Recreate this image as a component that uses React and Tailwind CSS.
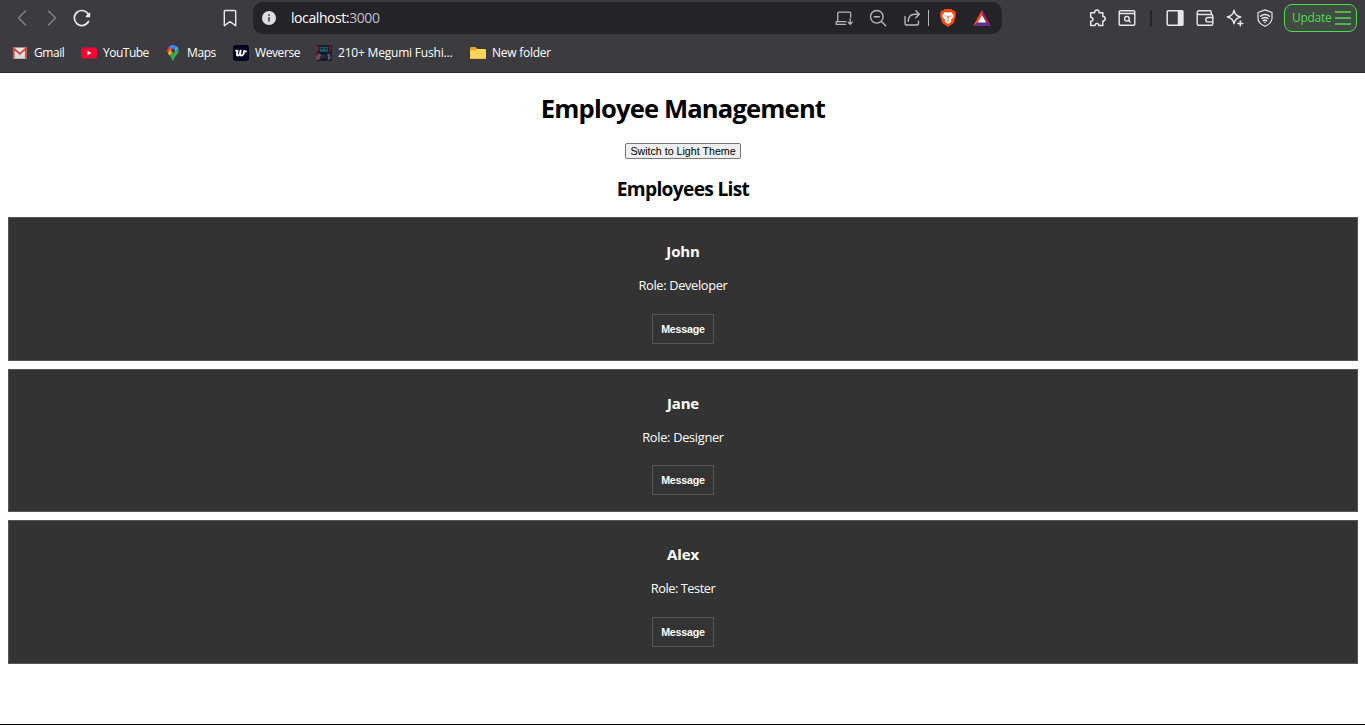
import React from 'react';

const stroke = { fill: 'none', stroke: 'currentColor', strokeLinecap: 'round', strokeLinejoin: 'round' };

function Icon({ children, size = 18, className = '', width = 1.4 }) {
  return (
    <svg width={size} height={size} viewBox={`0 0 ${size} ${size}`} className={`block shrink-0 ${className}`} {...stroke} strokeWidth={width}>
      {children}
    </svg>
  );
}

function GmailIcon() {
  return (
    <svg width="16" height="16" viewBox="0 0 16 16" className="block">
      <path d="M1 2.500h13.500v11H1z" fill="#e9e9e9" />
      <path d="M1 13.500 7.800 7l6.700 6.500z" fill="#dadada" />
      <path d="M1.700 13.500V3.500l6.100 5.300 6-5.300v10" fill="none" stroke="#db4437" strokeWidth="1.800" />
    </svg>
  );
}

function YouTubeIcon() {
  return (
    <svg width="16" height="16" viewBox="0 0 16 16" className="block">
      <rect x="0" y="2.500" width="16" height="11" rx="2.800" fill="#ff0033" />
      <path d="M6.500 5.800v4.400l4-2.200z" fill="#fff" />
    </svg>
  );
}

function MapsIcon() {
  return (
    <svg width="16" height="16" viewBox="0 0 16 16" className="block">
      <path d="M8 0a5.600 5.600 0 0 0-4.300 2L8 5.600 12 1.600A5.600 5.600 0 0 0 8 0z" fill="#4285f4" />
      <path d="M3.700 2A5.600 5.600 0 0 0 2.900 8L8 5.600z" fill="#ea4335" />
      <path d="M2.900 8c.4 1 1 1.800 1.700 2.600L10 5 6 4z" fill="#fbbc04" />
      <path d="M13.300 3.800c1 3.200-.6 5-2.200 6.900C9.600 12.600 9 14 8.600 15.500c-.2.600-1 .6-1.200 0-.5-1.800-1.300-3.200-2.800-4.900z" fill="#34a853" />
      <path d="M12 1.600c.6.600 1 1.300 1.300 2.200L10 7 8.500 4.500z" fill="#5a9bf8" />
      <circle cx="8" cy="5.500" r="2" fill="#3c3b40" />
    </svg>
  );
}

function WeverseIcon() {
  return (
    <svg width="16" height="16" viewBox="0 0 16 16" className="block">
      <rect width="16" height="16" rx="3" fill="#04041f" />
      <path d="M2.300 5.600h2.200L3.900 9c-.2 1 .3 1.500 1 1.500 1.400 0 2.200-1.600 2.700-4.900L7.200 9c-.1 1 .4 1.500 1.200 1.500 1.800 0 2.600-2 2.800-4.500.7.800 1.500.7 2.400-.1" fill="none" stroke="#fff" strokeWidth="1.900" strokeLinejoin="round" />
    </svg>
  );
}

function PixelArtIcon() {
  return (
    <svg width="16" height="16" viewBox="0 0 16 16" className="block">
      <path d="M0 0h16v16H0z" fill="#241c2b" />
      <path d="M0 1h3v5H1v3H0zM13 1h2v6h-1z" fill="#5c2936" />
      <path d="M4 2h8v5H4z" fill="#155666" />
      <path d="M5 3h2v1H5zM9 3h2v1H9z" fill="#071e2a" />
      <path d="M3 7h10v2H3z" fill="#151421" />
      <path d="m0 11 3-3 2 2-3 5H0zM11 9h3l1 5h-2z" fill="#8c3b48" />
      <path d="m3 9 2 1-2 5H2zM12 9h1v6h-1z" fill="#34658c" />
      <path d="M5 10h5v3H5z" fill="#332838" />
      <path d="M6 13h4v3H6z" fill="#111524" />
    </svg>
  );
}

function FolderIcon() {
  return (
    <svg width="16" height="16" viewBox="0 0 16 16" className="block">
      <path d="M0 3.500C0 2.700.5 2 1.300 2h4.200L7.300 4H15v3H0z" fill="#e8a824" />
      <path d="M0 5.500h5.600L7.300 4h7.200c.9 0 1.500.6 1.500 1.400v7c0 .9-.6 1.600-1.500 1.600h-13C.6 14 0 13.300 0 12.400z" fill="#ffd65b" />
      <path d="M.3 13.200c.3.500.7.800 1.200.8h13c.5 0 .9-.3 1.200-.8z" fill="#e9b93b" />
    </svg>
  );
}

function BraveIcon() {
  return (
    <svg width="16" height="18" viewBox="0 0 16 18" className="block">
      <path d="M4.700 0h6.600l1.600 1.700 1.700-.2L16 4l-.5 1.600.4 1.200-2.200 7.200L8 18l-5.700-4L.1 6.800l.4-1.200L0 4l1.400-2.500 1.700.2z" fill="#fb4b12" />
      <path d="m4.900 3.100 3.100.5 3.100-.5 2.700 3.100-.6 2.400-2.300 2.100.5 1.700L8 15l-3.400-2.600.5-1.700-2.300-2.100-.6-2.400z" fill="#fff" />
      <path d="m4.200 6.300 2.400.6-.7 1zM11.800 6.300l-2.400.6.700 1zM7.400 7h1.200v3L8 10.500 7.400 10zM6.200 12l1.800-.7 1.800.7-1.800.6z" fill="#fb4b12" />
    </svg>
  );
}

function BatIcon() {
  return (
    <svg width="18" height="16" viewBox="0 0 18 16" className="block">
      <path d="M9 0v5.500L4.800 12.500 0 16z" fill="#ff4724" />
      <path d="m9 0 9 16-4.800-3.500L9 5.500z" fill="#9e1f63" />
      <path d="m0 16 4.800-3.500h8.400L18 16z" fill="#662d91" />
      <path d="m9 5.200 4.300 7.400H4.700z" fill="#fff" />
    </svg>
  );
}

const bookmarks = [
  { name: 'Gmail', icon: GmailIcon, box: 'w-[69px]', text: 'tracking-[-0.42px]' },
  { name: 'YouTube', icon: YouTubeIcon, box: 'w-[84px]', text: 'tracking-[-0.5px]' },
  { name: 'Maps', icon: MapsIcon, box: 'w-[68px]', text: 'tracking-[-0.4px]' },
  { name: 'Weverse', icon: WeverseIcon, box: 'w-[83px]', text: 'tracking-[-0.4px]' },
  { name: '210+ Megumi Fushi...', icon: PixelArtIcon, box: 'w-[154px]', text: 'tracking-[-0.2px]' },
  { name: 'New folder', icon: FolderIcon, box: 'w-[100px]', text: 'tracking-[-0.25px]' },
];

const employees = [
  { name: 'John', role: 'Developer', card: 'h-36 mb-2', gap: 'mt-5', track: 'tracking-[-0.33px]' },
  { name: 'Jane', role: 'Designer', card: 'h-[143px] mb-2', gap: 'mt-[19px]', track: 'tracking-[-0.3px]' },
  { name: 'Alex', role: 'Tester', card: 'h-36', gap: 'mt-5', track: 'tracking-[-0.45px]' },
];

function BrowserBar() {
  return (
    <header className="h-[73px] border-b border-[#2b2a2e] bg-[#3c3b40] text-[#e8e7eb]">
      <div className="flex h-9 items-center pl-[13px] pr-2">
        <Icon className="text-[#84838a]"><path d="M12.500 2 5.500 9l7 7" /></Icon>
        <Icon className="ml-3 text-[#84838a]"><path d="m5.500 2 7 7-7 7" /></Icon>
        <Icon className="ml-3" width={1.700}>
          <path d="M15.700 6A7.500 7.500 0 1 0 15.500 12.500" />
          <path d="m16.400 4.600v2.800h-2.800z" fill="currentColor" stroke="currentColor" />
        </Icon>
        <Icon className="ml-[130px]"><path d="M4.200 1.500h9.600c.5 0 .9.400.9.900v14.300L9 12.600l-5.700 4.100V2.400c0-.5.400-.9.900-.9z" /></Icon>
        <div className="ml-[14px] flex h-8 w-[749px] items-center rounded-[10px] bg-[#242328] pl-[9px] pr-[11px]">
          <svg width="14" height="14" viewBox="0 0 14 14" className="block">
            <circle cx="7" cy="7" r="7" fill="#dedde1" />
            <path d="M6.100 6h1.800v4.500H6.100zM6.100 3.300h1.800V5H6.100z" fill="#55545a" />
          </svg>
          <span className="ml-[15px] whitespace-nowrap pb-px text-[14px] tracking-[-0.42px] text-white">localhost:<span className="text-[#c0bfc6]">3000</span></span>
          <Icon className="ml-auto text-[#b8b7be]">
            <path d="M2.800 12.500V4.200c0-.6.400-1 1-1h10.900c.6 0 1 .4 1 1v4M1.200 15.300h9.600M1.200 12.700h9.600M1.200 12.700v2.600M15.200 10v5.300m-2-2 2 2 2-2" strokeWidth="1.300" />
          </Icon>
          <Icon className="ml-4 text-[#b8b7be]"><circle cx="7.800" cy="7.800" r="6.300" /><path d="m12.500 12.500 4.200 4.200M5.300 7.800h5" /></Icon>
          <Icon className="ml-4 text-[#b8b7be]"><path d="M2 7.500v6.700c0 1 .7 1.800 1.800 1.800h9.900c1 0 1.800-.8 1.800-1.800v-2M5.300 12.200c0-4.500 2.700-7 6.500-7H16M12.800 1.700 16.300 5.200l-3.500 3.500" /></Icon>
          <span className="ml-[7px] h-4 w-px bg-[#b8b7be]" />
          <span className="ml-[11px]"><BraveIcon /></span>
          <span className="ml-[17px]"><BatIcon /></span>
        </div>
        <Icon className="ml-[86px]" width={1.500}>
          <path d="M2.700 3.800h4C6.400 2.200 7.400 1 8.900 1s2.500 1.200 2.200 2.800h3.700v3.800c1.400 0 2.400.9 2.400 2.200s-1 2.200-2.400 2.200v4.500h-4c0-1.400-.8-2.100-1.900-2.100s-1.900.7-1.900 2.100H2.700v-4.200c1.300 0 2.200-.8 2.200-2s-.9-2-2.200-2z" />
        </Icon>
        <Icon className="ml-3" width={1.400}>
          <rect x="1.200" y="1.700" width="15.600" height="14.600" rx="1" /><path d="M1.500 4.500h15" strokeWidth="1.500" />
          <circle cx="8.900" cy="9.700" r="2.300" /><path d="m10.700 11.500 1.500 1.500" />
        </Icon>
        <span className="ml-[14px] h-4 w-[2px] bg-[#242328]" />
        <Icon className="ml-[14px]" width={1.500}><rect x="1.200" y="1.700" width="15.600" height="14.600" rx="1" /><path d="M12.500 2h4v14h-4z" fill="currentColor" /></Icon>
        <Icon className="ml-3" width={1.400}>
          <path d="M15.300 5.500V3.200c0-.8-.6-1.500-1.500-1.500H2.900C2 1.700 1.200 2.400 1.200 3.300v11.400c0 .9.700 1.600 1.600 1.600h12.400c.9 0 1.600-.7 1.600-1.600V7c0-.8-.7-1.500-1.600-1.500H2.800c-.9 0-1.600-.8-1.600-1.700" />
          <path d="M16.800 8.500H12a2.200 2.200 0 0 0 0 4.400h4.800" />
        </Icon>
        <Icon className="ml-3" width={1.500}>
          <path d="M8 1.300c.8 4.300 2.400 5.900 6.700 6.700-4.300.8-5.900 2.400-6.700 6.700-.8-4.300-2.400-5.900-6.700-6.700C5.600 7.200 7.200 5.600 8 1.300zM14.300 12v5M11.800 14.500h5" />
        </Icon>
        <Icon className="ml-3" width={1.200}>
          <path d="m9 .9 7 2.600v5.700c0 3.700-3 6.300-7 8-4-1.700-7-4.300-7-8V3.500z" />
          <path d="M4.700 7.200c2.600-2 6-2 8.600 0M6 9.500c1.900-1.400 4.100-1.400 6 0M7.400 11.700c1-.8 2.200-.8 3.200 0" strokeWidth="1.500" /><circle cx="9" cy="13.300" r=".3" />
        </Icon>
        <button className="ml-auto flex h-7 w-[73px] shrink-0 items-center rounded-lg border border-[#51d94f] bg-[#404b43] pl-[7px] text-[#51d94f]">
          <span className="w-[43px] whitespace-nowrap text-left text-[12px] tracking-[-0.3px]">Update</span>
          <svg width="16" height="14" viewBox="0 0 16 14" className="block shrink-0"><path d="M0 1h16M0 7h16M0 13h16" stroke="currentColor" strokeWidth="1.700" /></svg>
        </button>
      </div>
      <nav className="flex h-[34px] items-center pl-3">
        {bookmarks.map(({ name, icon: Mark, box, text }) => (
          <a key={name} className={`flex shrink-0 items-center gap-[6px] ${box}`}>
            <Mark />
            <span className={`whitespace-nowrap text-[12px] text-white ${text}`}>{name}</span>
          </a>
        ))}
      </nav>
    </header>
  );
}

function EmployeeCard({ name, role, card, gap, track }) {
  return (
    <article className={`flex flex-col items-center border border-[#555] bg-[#333] text-white ${card}`}>
      <h3 className="mt-[23px] text-[15px] font-bold leading-5 tracking-[-0.15px]">{name}</h3>
      <p className={`mt-[15px] text-[12.8px] leading-[18px] ${track}`}>Role: {role}</p>
      <button className={`h-[30px] w-[62px] border border-[#555] font-['Liberation_Sans',Arial,sans-serif] text-[10.67px] font-bold tracking-[-0.2px] ${gap}`}>Message</button>
    </article>
  );
}

export default function App() {
  return (
    <div className="flex h-[725px] w-[1365px] flex-col overflow-hidden border-b border-black bg-white font-['Open_Sans','Noto_Sans',sans-serif] text-black">
      <BrowserBar />
      <main className="flex flex-col px-2 pr-[7px] text-center">
        <h1 className="mt-[18px] text-[25.6px] font-bold leading-9 tracking-[-0.85px]">Employee Management</h1>
        <button className="mx-auto mt-4 flex h-4 w-[116px] items-center justify-center whitespace-nowrap rounded-[2px] border border-[#767676] bg-[#efefef] font-['Liberation_Sans',Arial,sans-serif] text-[10.67px]">Switch to Light Theme</button>
        <h2 className="mt-[17px] text-[19.2px] font-bold leading-[26px] tracking-[-0.7px]">Employees List</h2>
        <section className="mt-[15px]">
          {employees.map((employee) => <EmployeeCard key={employee.name} {...employee} />)}
        </section>
      </main>
    </div>
  );
}
